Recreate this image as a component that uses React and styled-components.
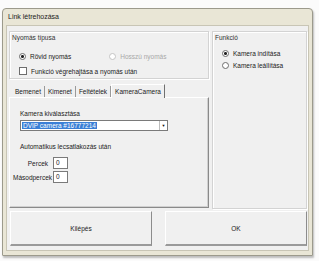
import React from 'react'
import styled, {createGlobalStyle} from 'styled-components'

const Global = createGlobalStyle`
  html, body {
    margin: 0;
    padding: 0;
    background: #fbfbfb;
  }
  body {
    font-family: 'Liberation Sans', Arial, sans-serif;
    font-size: 6.5px;
    color: #1a1a1a;
  }
`

function App() {
    return (
        <>
            <Global/>
            <Page>
                <Window>
                    <TitleBar>Link létrehozása</TitleBar>
                    <Client>
                        <LeftCol>
                            <GroupBox $h={48}>
                                <Legend>Nyomás típusa</Legend>
                                <Row $gap={38} $top={12}>
                                    <Option><Radio $checked/>Rövid nyomás</Option>
                                    <Option $disabled><Radio $disabled/>Hosszú nyomás</Option>
                                </Row>
                                <Row $top={7}>
                                    <Option><Check/>Funkció végrehajtása a nyomás után</Option>
                                </Row>
                            </GroupBox>
                            <Tabs>
                                <Tab>Bemenet</Tab>
                                <Tab>Kimenet</Tab>
                                <Tab>Feltételek</Tab>
                                <Tab $active>KameraCamera</Tab>
                            </Tabs>
                            <Panel>
                                <Label>Kamera kiválasztása</Label>
                                <Select>
                                    <Selected><SelText>DVIP camera #16777214</SelText></Selected>
                                    <Arrow>▼</Arrow>
                                </Select>
                                <Label $top={12}>Automatikus lecsatlakozás után</Label>
                                <Fields>
                                    <Field>
                                        <FieldLabel>Percek</FieldLabel>
                                        <Input>0</Input>
                                    </Field>
                                    <Field>
                                        <FieldLabel>Másodpercek</FieldLabel>
                                        <Input>0</Input>
                                    </Field>
                                </Fields>
                            </Panel>
                        </LeftCol>
                        <GroupBox $h={178}>
                            <Legend>Funkció</Legend>
                            <Row $top={9}>
                                <Option><Radio $checked/>Kamera indítása</Option>
                            </Row>
                            <Row $top={5}>
                                <Option><Radio/>Kamera leállítása</Option>
                            </Row>
                        </GroupBox>
                        <Buttons>
                            <Button>Kilépés</Button>
                            <Button>OK</Button>
                        </Buttons>
                    </Client>
                </Window>
            </Page>
        </>
    )
}

export default App

const Page = styled.div`
  width: 319px;
  height: 261px;
  padding: 8px 6px 0 2px;
  box-sizing: border-box;
`

const Window = styled.div`
  width: 311px;
  height: 248px;
  box-sizing: border-box;
  background: #e9e6d6;
  border: 1px solid #9c9a8c;
  border-radius: 4px 4px 1px 1px;
  padding: 0 3px 4px 3px;
  display: flex;
  flex-direction: column;
  box-shadow: 1px 2px 2px rgba(0,0,0,0.25);
`

const TitleBar = styled.div`
  height: 16px;
  line-height: 16px;
  padding-left: 2px;
  font-size: 7px;
  color: #222;
`

const Client = styled.div`
  flex: 1;
  background: #f0f0f0;
  border: 1px solid #c8c5b5;
  padding: 5px 1px 0 2px;
  display: grid;
  grid-template-columns: 200px 95px;
  grid-template-rows: auto 1fr;
  column-gap: 3px;
  align-content: start;
`

const LeftCol = styled.div`
  display: flex;
  flex-direction: column;
`

const GroupBox = styled.div`
  height: ${p => p.$h}px;
  box-sizing: border-box;
  border: 1px solid #d3d3d3;
  box-shadow: inset 1px 1px 0 #fff, 1px 1px 0 #fff;
  padding: 0 0 0 9px;
`

const Legend = styled.div`
  margin: 2px 0 0 -7px;
  color: #333;
`

const Row = styled.div`
  display: flex;
  gap: ${p => p.$gap || 0}px;
  margin-top: ${p => p.$top}px;
`

const Option = styled.div`
  display: flex;
  align-items: center;
  gap: 4px;
  color: ${p => p.$disabled ? '#a8a8a8' : '#1a1a1a'};
`

const Radio = styled.span`
  width: 5px;
  height: 5px;
  border-radius: 50%;
  border: 1px solid ${p => p.$disabled ? '#c4c4c4' : '#6d6d6d'};
  background: ${p => p.$checked ? 'radial-gradient(circle, #222 0 1.3px, #fff 1.6px)' : '#fff'};
`

const Check = styled.span`
  width: 6px;
  height: 6px;
  border: 1px solid #6d6d6d;
  background: #fff;
`

const Tabs = styled.div`
  display: flex;
  align-items: flex-end;
  margin-top: 5px;
  height: 13px;
  padding-left: 3px;
`

const Tab = styled.div`
  padding: 0 3px;
  height: ${p => p.$active ? 13 : 11}px;
  line-height: ${p => p.$active ? 13 : 11}px;
  border-right: 1px solid ${p => p.$active ? '#707070' : '#9a9a9a'};
  border-left: ${p => p.$active ? '1px solid #fff' : 'none'};
  border-top: ${p => p.$active ? '1px solid #fff' : 'none'};
  background: #f0f0f0;
  margin-bottom: ${p => p.$active ? -1 : 0}px;
  position: relative;
  z-index: ${p => p.$active ? 1 : 0};
`

const Panel = styled.div`
  height: 111px;
  box-sizing: border-box;
  border: 1px solid #fff;
  border-right: 1px solid #8a8a8a;
  border-bottom: 1px solid #8a8a8a;
  box-shadow: inset -1px -1px 0 #d0d0d0;
  padding: 12px 0 0 10px;
`

const Label = styled.div`
  margin-top: ${p => p.$top || 0}px;
  color: #222;
`

const Select = styled.div`
  margin-top: 3px;
  width: 148px;
  height: 11px;
  box-sizing: border-box;
  background: #fff;
  border: 1px solid #7a7a7a;
  display: flex;
  align-items: stretch;
`

const Selected = styled.div`
  flex: 1;
  display: flex;
  align-items: stretch;
  padding: 1px;
`

const SelText = styled.span`
  background: #3a7fd6;
  color: #fff;
  padding: 0 1px;
  display: flex;
  align-items: center;
`

const Arrow = styled.div`
  width: 7px;
  font-size: 4px;
  display: flex;
  align-items: center;
  justify-content: center;
  border-left: 1px solid #bdbdbd;
  color: #111;
`

const Fields = styled.div`
  display: flex;
  flex-direction: column;
  gap: 2px;
  margin-top: 7px;
`

const Field = styled.div`
  display: flex;
  align-items: center;
`

const FieldLabel = styled.div`
  width: 35px;
  margin-left: -7px;
  text-align: right;
  padding-right: 5px;
  color: #222;
`

const Input = styled.div`
  width: 15px;
  height: 12px;
  box-sizing: border-box;
  border: 1px solid #7a7a7a;
  background: #fff;
  padding-left: 2px;
  line-height: 10px;
`

const Buttons = styled.div`
  grid-column: 1 / 3;
  display: flex;
  justify-content: space-between;
  margin-top: 2px;
  padding-left: 1px;
`

const Button = styled.div`
  width: 142px;
  height: 35px;
  box-sizing: border-box;
  background: #f0f0f0;
  border-top: 1px solid #fff;
  border-left: 1px solid #fff;
  border-right: 1px solid #8c8c8c;
  border-bottom: 2px solid #9a9a9a;
  display: flex;
  align-items: center;
  justify-content: center;
  color: #222;
`
